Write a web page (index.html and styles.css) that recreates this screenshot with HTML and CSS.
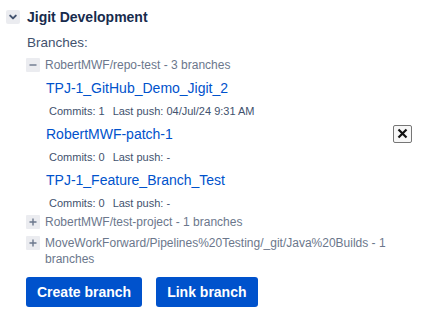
FILE: index.html
```html
<!DOCTYPE html>
<html lang="en">
<head>
  <meta charset="UTF-8">
  <title>Jigit Development</title>
  <meta name="viewport" content="width=device-width, initial-scale=1.0">
  <link rel="stylesheet" href="styles.css">
</head>
<body>
  <div class="panel">
    <div class="panel-header">
      <span class="toggle">
        <svg width="10" height="10" viewBox="0 0 10 10"><path d="M2.2 3.6 L5 6.4 L7.8 3.6" fill="none" stroke="#42526e" stroke-width="2" stroke-linecap="round" stroke-linejoin="round"/></svg>
      </span>
      <h2>Jigit Development</h2>
    </div>

    <div class="section-label">Branches:</div>

    <div class="repo open">
      <div class="repo-row">
        <span class="expander">
          <svg width="10" height="10" viewBox="0 0 10 10"><path d="M1.5 5 H8.5" stroke="#6b778c" stroke-width="1.4"/></svg>
        </span>
        <span class="repo-name">RobertMWF/repo-test - 3 branches</span>
      </div>
      <div class="branches">
        <div class="branch-row">
          <a href="#" class="branch-link">TPJ-1_GitHub_Demo_Jigit_2</a>
        </div>
        <div class="commit-info"><span>Commits: 1</span><span>Last push: 04/Jul/24 9:31 AM</span></div>

        <div class="branch-row">
          <a href="#" class="branch-link">RobertMWF-patch-1</a>
          <button class="close-btn" title="Close">
            <svg width="11" height="11" viewBox="0 0 11 11"><path d="M1.5 1.5 L9.5 9.5 M9.5 1.5 L1.5 9.5" stroke="#111" stroke-width="2.2"/></svg>
          </button>
        </div>
        <div class="commit-info"><span>Commits: 0</span><span>Last push: -</span></div>

        <div class="branch-row">
          <a href="#" class="branch-link">TPJ-1_Feature_Branch_Test</a>
        </div>
        <div class="commit-info"><span>Commits: 0</span><span>Last push: -</span></div>
      </div>
    </div>

    <div class="repo">
      <div class="repo-row">
        <span class="expander">
          <svg width="10" height="10" viewBox="0 0 10 10"><path d="M1.5 5 H8.5 M5 1.5 V8.5" stroke="#6b778c" stroke-width="1.4"/></svg>
        </span>
        <span class="repo-name">RobertMWF/test-project - 1 branches</span>
      </div>
    </div>

    <div class="repo">
      <div class="repo-row">
        <span class="expander">
          <svg width="10" height="10" viewBox="0 0 10 10"><path d="M1.5 5 H8.5 M5 1.5 V8.5" stroke="#6b778c" stroke-width="1.4"/></svg>
        </span>
        <span class="repo-name">MoveWorkForward/Pipelines%20Testing/_git/Java%20Builds - 1 branches</span>
      </div>
    </div>

    <div class="actions">
      <button class="btn">Create branch</button>
      <button class="btn">Link branch</button>
    </div>
  </div>
</body>
</html>
```

FILE: styles.css
```css
body {
  font-family: "Liberation Sans", Arial, sans-serif;
  background: #fff;
  margin: 0;
  padding: 0;
  color: #172b4d;
}

.panel {
  padding: 6px 12px 0 6px;
}

.panel-header {
  display: flex;
  align-items: center;
  gap: 7px;
  height: 22px;
}

.toggle {
  display: flex;
  align-items: center;
  justify-content: center;
  width: 14px;
  height: 14px;
  background: #ebecf0;
  border-radius: 2px;
}

.panel-header h2 {
  margin: 0;
  font-size: 14px;
  font-weight: bold;
  color: #172b4d;
}

.section-label {
  margin: 5px 0 0 21px;
  font-size: 13.5px;
  line-height: 20px;
  color: #42526e;
}

.repo {
  margin: 5px 0 0 20px;
}

.section-label + .repo,
.repo.open + .repo {
  margin-top: 0;
}

.section-label + .repo {
  margin-top: 4px;
}

.repo-row {
  display: flex;
  align-items: flex-start;
  gap: 5px;
}

.expander {
  flex: none;
  display: flex;
  align-items: center;
  justify-content: center;
  width: 14px;
  height: 14px;
  margin-top: 1px;
  background: #ebecf0;
  border-radius: 1px;
}

.repo-name {
  font-size: 12px;
  line-height: 16px;
  color: #6b778c;
}

.branches {
  margin: 3px 0 0 20px;
}

.branch-row {
  display: flex;
  justify-content: space-between;
  align-items: center;
  height: 23px;
}

.branch-link {
  font-size: 14px;
  color: #0052cc;
  text-decoration: none;
}

.close-btn {
  display: flex;
  align-items: center;
  justify-content: center;
  width: 19px;
  height: 18px;
  margin-right: 1px;
  padding: 0;
  background: #f7f7f7;
  border: 1px solid #767676;
  border-radius: 2px;
}

.commit-info {
  display: flex;
  gap: 8px;
  height: 23px;
  align-items: center;
  padding-left: 3px;
  font-size: 11px;
  color: #42526e;
}

.actions {
  display: flex;
  gap: 14px;
  margin: 10px 0 0 20px;
}

.btn {
  height: 30px;
  padding: 0 11px;
  background: #0052cc;
  color: #fff;
  border: none;
  border-radius: 3px;
  font-family: inherit;
  font-size: 14px;
  font-weight: bold;
}
```
